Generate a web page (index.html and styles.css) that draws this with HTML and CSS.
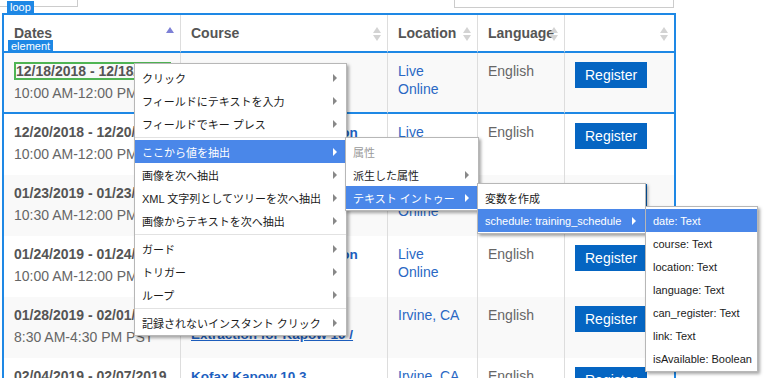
FILE: index.html
```html
<!DOCTYPE html>
<html lang="ja">
<head>
  <meta charset="UTF-8">
  <meta name="viewport" content="width=device-width, initial-scale=1.0">
  <title>Training schedule</title>
  <link rel="stylesheet" href="styles.css">
</head>
<body>
  <div class="filters">
    <div class="filter-box filter-left"></div>
    <div class="filter-box filter-right"></div>
  </div>

  <div class="loop">
    <span class="tag tag-loop">loop</span>
    <span class="tag tag-element">element</span>
    <table class="schedule">
      <colgroup>
        <col style="width: 176px">
        <col style="width: 207px">
        <col style="width: 90px">
        <col style="width: 87px">
        <col style="width: 110px">
      </colgroup>
      <thead>
        <tr>
          <th>Dates<span class="sort asc"></span></th>
          <th>Course<span class="sort"></span></th>
          <th>Location<span class="sort"></span></th>
          <th>Language<span class="sort"></span></th>
          <th><span class="sort"></span></th>
        </tr>
      </thead>
      <tbody>
        <tr class="element">
          <td><div class="date picked">12/18/2018 - 12/18/2018</div><div class="time">10:00 AM-12:00 PM PST</div></td>
          <td><a class="course">Kofax RPA Basics</a></td>
          <td><a class="place">Live Online</a></td>
          <td>English</td>
          <td><button class="register">Register</button></td>
        </tr>
        <tr>
          <td><div class="date">12/20/2018 - 12/20/2018</div><div class="time">10:00 AM-12:00 PM PST</div></td>
          <td><a class="course">Kofax RPA Administration</a></td>
          <td><a class="place">Live Online</a></td>
          <td>English</td>
          <td><button class="register">Register</button></td>
        </tr>
        <tr>
          <td><div class="date">01/23/2019 - 01/23/2019</div><div class="time">10:30 AM-12:00 PM PST</div></td>
          <td><a class="course">Kofax RPA Basics</a></td>
          <td><a class="place">Live Online</a></td>
          <td>English</td>
          <td><button class="register">Register</button></td>
        </tr>
        <tr>
          <td><div class="date">01/24/2019 - 01/24/2019</div><div class="time">10:00 AM-12:00 PM PST</div></td>
          <td><a class="course">Kofax RPA Administration</a></td>
          <td><a class="place">Live Online</a></td>
          <td>English</td>
          <td><button class="register">Register</button></td>
        </tr>
        <tr>
          <td><div class="date">01/28/2019 - 02/01/2019</div><div class="time">8:30 AM-4:30 PM PST</div></td>
          <td><a class="course hover">Kofax RPA Training<br>Extraction for Kapow 10 /</a></td>
          <td><a class="place">Irvine, CA</a></td>
          <td>English</td>
          <td><button class="register">Register</button></td>
        </tr>
        <tr>
          <td><div class="date">02/04/2019 - 02/07/2019</div><div class="time">8:30 AM-4:30 PM PST</div></td>
          <td><a class="course">Kofax Kapow 10.3</a></td>
          <td><a class="place">Irvine, CA</a></td>
          <td>English</td>
          <td><button class="register">Register</button></td>
        </tr>
      </tbody>
    </table>
  </div>

  <!-- context menus opened on the picked element -->
  <div class="menu menu-main">
    <div class="menu-item sub">クリック</div>
    <div class="menu-item sub">フィールドにテキストを入力</div>
    <div class="menu-item sub">フィールドでキー プレス</div>
    <div class="menu-sep"></div>
    <div class="menu-item sub active">ここから値を抽出</div>
    <div class="menu-item sub">画像を次へ抽出</div>
    <div class="menu-item sub">XML 文字列としてツリーを次へ抽出</div>
    <div class="menu-item sub">画像からテキストを次へ抽出</div>
    <div class="menu-sep"></div>
    <div class="menu-item sub">ガード</div>
    <div class="menu-item sub">トリガー</div>
    <div class="menu-item sub">ループ</div>
    <div class="menu-sep"></div>
    <div class="menu-item sub">記録されないインスタント クリック</div>
  </div>

  <div class="menu menu-extract">
    <div class="menu-item disabled">属性</div>
    <div class="menu-item sub">派生した属性</div>
    <div class="menu-item sub active">テキスト イントゥー</div>
  </div>

  <div class="menu menu-into">
    <div class="menu-item">変数を作成</div>
    <div class="menu-item sub active">schedule: training_schedule</div>
  </div>

  <div class="menu menu-fields">
    <div class="menu-item active">date: Text</div>
    <div class="menu-item">course: Text</div>
    <div class="menu-item">location: Text</div>
    <div class="menu-item">language: Text</div>
    <div class="menu-item">can_register: Text</div>
    <div class="menu-item">link: Text</div>
    <div class="menu-item">isAvailable: Boolean</div>
  </div>
</body>
</html>
```

FILE: styles.css
```css
* {
  box-sizing: border-box;
}
body {
  margin: 0;
  overflow: hidden;
  background: #fff;
  font-family: "Liberation Sans", Arial, sans-serif;
  color: #666;
}

/* partly scrolled-off search boxes */
.filters {
  display: flex;
  align-items: flex-start;
}
.filter-box {
  border: 1px solid #ccc;
  border-top: 0;
}
.filter-left {
  width: 78px;
  height: 7px;
  border-left: 0;
}
.filter-right {
  width: 220px;
  height: 8px;
  margin-left: 376px;
}

/* recorder highlight of the loop */
.loop {
  position: relative;
  width: 674px;
  margin: 5px 0 0 2px;
  border: 2px solid #1e88e5;
  border-bottom: 0;
}
.tag {
  position: absolute;
  z-index: 1;
  height: 12px;
  padding: 0 3px;
  background: #1e88e5;
  color: #fff;
  font-size: 11px;
  line-height: 12px;
}
.tag-loop {
  left: 3px;
  top: -14px;
}
.tag-element {
  left: 4px;
  top: 25px;
}

.schedule {
  width: 670px;
  table-layout: fixed;
  border-collapse: separate;
  border-spacing: 0;
}
.schedule th {
  position: relative;
  height: 38px;
  padding: 0 10px;
  border-bottom: 2px solid #1e88e5;
  background: #fff;
  text-align: left;
  font-size: 14px;
  color: #555;
  white-space: nowrap;
}
.schedule th + th,
.schedule td + td {
  border-left: 1px solid #ddd;
}
.schedule td {
  height: 61px;
  padding: 9px 10px;
  vertical-align: top;
  font-size: 14px;
  line-height: 18px;
}
.schedule tbody tr:nth-child(odd) {
  background: #f9f9f9;
}
.schedule tr.element td {
  height: 61px;
  border-bottom: 2px solid #1e88e5;
}

/* sort arrows */
.sort {
  position: absolute;
  right: 6px;
  top: 12px;
  width: 8px;
  height: 14px;
}
.sort::before,
.sort::after {
  content: "";
  position: absolute;
  left: 0;
  border-left: 4px solid transparent;
  border-right: 4px solid transparent;
}
.sort::before {
  top: 0;
  border-bottom: 6px solid #d3d3d3;
}
.sort::after {
  top: 8px;
  border-top: 6px solid #d3d3d3;
}
.sort.asc::before {
  border-bottom-color: #7d80d6;
}
.sort.asc::after {
  display: none;
}

.date {
  font-weight: bold;
  color: #555;
  white-space: nowrap;
}
.date.picked {
  width: fit-content;
  border: 2px solid #4fb453;
  line-height: 14px;
}
.time {
  margin-top: 4px;
  white-space: nowrap;
}
.course {
  font-size: 13.5px;
  font-weight: bold;
  color: #1d5fbf;
}
.course.hover {
  text-decoration: underline;
}
.place {
  color: #2a68c4;
}
.register {
  height: 26px;
  padding: 0 10px;
  border: 0;
  background: #0565c2;
  color: #fff;
  font-family: "Liberation Sans", Arial, sans-serif;
  font-size: 14px;
}

/* context menus */
.menu {
  position: absolute;
  padding: 2px 0 1px;
  background: #fff;
  border: 1px solid #b7b7b7;
  box-shadow: 2px 2px 3px rgba(0, 0, 0, 0.35);
  font-family: "Liberation Sans", "Noto Sans CJK JP", sans-serif;
  font-size: 11px;
  color: #1b1b1b;
}
.menu-main {
  left: 134px;
  top: 63px;
  width: 213px;
}
.menu-extract {
  left: 345px;
  top: 137px;
  width: 134px;
}
.menu-into {
  left: 477px;
  top: 183px;
  width: 169px;
}
.menu-fields {
  left: 645px;
  top: 206px;
  width: 113px;
}
.menu-item {
  display: flex;
  align-items: center;
  height: 23px;
  padding: 0 9px 0 7px;
  white-space: nowrap;
}
.menu-item.sub::after {
  content: "";
  margin-left: auto;
  border-left: 4px solid #888;
  border-top: 4px solid transparent;
  border-bottom: 4px solid transparent;
}
.menu-item.active {
  background: #4a87e9;
  color: #fff;
}
.menu-item.active::after {
  border-left-color: #fff;
}
.menu-item.disabled {
  color: #9a9a9a;
}
.menu-sep {
  height: 1px;
  margin: 2px 0;
  background: #e2e2e2;
}
```
